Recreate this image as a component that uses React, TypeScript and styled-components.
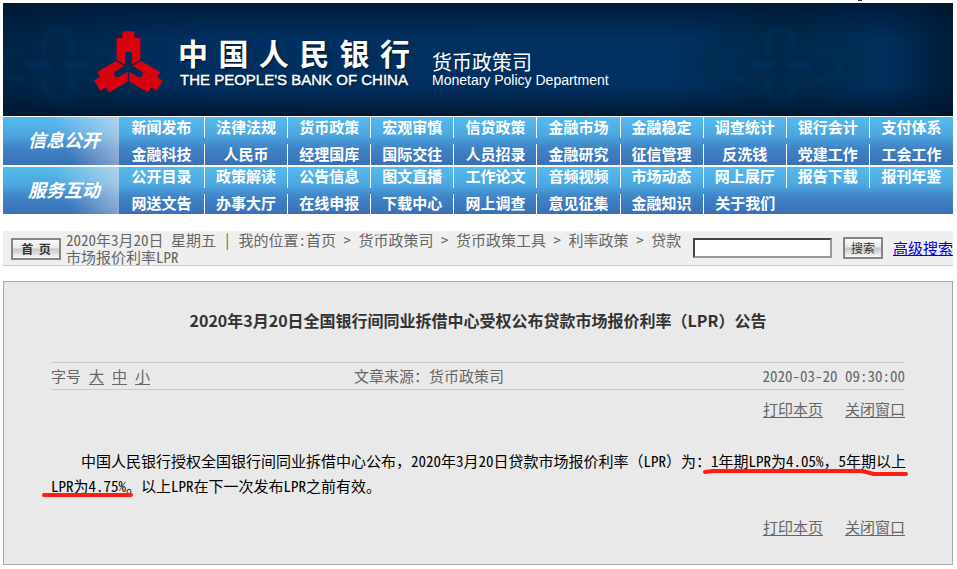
import React from "react";
import styled, { createGlobalStyle } from "styled-components";

const CJK = `"Noto Sans CJK SC", sans-serif`;
const MONO = `"Noto Sans Mono CJK SC", "Liberation Serif", "Noto Sans CJK SC", monospace`;

const GlobalStyle = createGlobalStyle`
  * { box-sizing: border-box; }
  body {
    margin: 0;
    background: #fff;
    font-family: ${MONO};
    font-size: 15px;
    color: #666;
    text-spacing-trim: space-all;
  }
`;

const Page = styled.div`
  padding: 3px 4px 4px 3px;
  background: linear-gradient(#334, #334) 90% 0 / 4px 1px no-repeat;
`;

const Banner = styled.header`
  position: relative;
  z-index: 0;
  display: flex;
  align-items: flex-start;
  height: 113px;
  padding: 28px 0 0 90px;
  overflow: hidden;
  color: #fff;
  background:
    linear-gradient(180deg, rgba(0, 20, 44, 0.7) 0, rgba(0, 20, 44, 0) 36px, rgba(0, 20, 44, 0) 82px, rgba(0, 20, 44, 0.8) 100%),
    linear-gradient(90deg, #002345 0%, #002a52 7%, #003060 22%, #003161 70%, #002a4e 82%, #002f5c 93%, #001c3a 100%);
`;

const Watermark = styled.svg<{ $side: "left" | "right" }>`
  position: absolute;
  z-index: -1;
  top: 12px;
  width: 190px;
  height: 96px;
  opacity: 0.4;
  filter: blur(2px);
  ${(p) => (p.$side === "left" ? "left: -40px;" : "right: 77px;")}
`;

const Emblem = styled.svg`
  flex: none;
  width: 71px;
  height: 63px;
`;

const BankName = styled.div`
  flex: none;
  width: 232px;
  margin: 4px 0 0 14px;
  text-shadow: 1px 1px 2px rgba(0, 0, 0, 0.6);
`;

const BankNameZh = styled.div`
  display: flex;
  justify-content: space-between;
  font: 700 30px/34px ${CJK};
`;

const BankNameEn = styled.div`
  padding: 1px 0 0 2px;
  font: 400 15px/20px "Liberation Sans", sans-serif;
  -webkit-text-stroke: 0.4px #fff;
  white-space: nowrap;
`;

const Department = styled.div`
  flex: none;
  margin: 18px 0 0 22px;
  white-space: nowrap;
`;

const DepartmentZh = styled.div`
  font: 400 20px/26px ${CJK};
`;

const DepartmentEn = styled.div`
  font: 400 14px/10px "Liberation Sans", sans-serif;
`;

const NavGroup = styled.nav`
  display: grid;
  grid-template-columns: 116px 1fr;
  height: 48px;
  margin-top: 1px;
  background: linear-gradient(180deg, #54bbef 0%, #4ea9e0 35%, #3f83c6 65%, #3a70b5 100%);

  & + & {
    height: 47px;
    margin-top: 2px;
  }
`;

const NavLabel = styled.div`
  display: flex;
  align-items: center;
  justify-content: center;
  padding: 0 0 4px 6px;
  color: #fff;
  font: italic 700 18px/24px ${CJK};
  background: linear-gradient(65deg, rgba(225, 225, 235, 0) 50%, rgba(225, 225, 235, 0.65) 100%);
`;

const NavGrid = styled.ul`
  display: grid;
  grid-template-columns: 86px repeat(9, 1fr);
  grid-template-rows: 1fr 1fr;
  row-gap: 6px;
  margin: 0;
  padding: 0;
  list-style: none;
`;

const NavItem = styled.li<{ $last: boolean }>`
  display: flex;
  align-items: center;
  justify-content: center;
  padding-bottom: 2px;
  border-right: ${(p) => (p.$last ? "0" : "1px solid #fff")};
`;

const NavLink = styled.a`
  color: #fff;
  font: 700 15px/18px ${CJK};
  text-decoration: none;
  white-space: nowrap;
`;

const LocationBar = styled.div`
  display: flex;
  align-items: flex-start;
  margin-top: 17px;
  padding-left: 8px;
  background: #efefef;
  border-bottom: 1px solid #ccc;
`;

const ChromeButton = styled.button`
  flex: none;
  height: 22px;
  padding: 0 0 1px;
  border: 2px solid #858585;
  background: linear-gradient(180deg, #fafafa 0%, #e8e8e8 45%, #c6c6c6 50%, #dedede 75%, #f8f8f8 100%);
  color: #333;
`;

const HomeButton = styled(ChromeButton)`
  display: flex;
  align-items: center;
  justify-content: center;
  width: 50px;
  margin-top: 7px;
  font: 700 12px/16px ${CJK};
  white-space: pre;
`;

const SearchButton = styled(ChromeButton)`
  width: 40px;
  margin: 0 10px 0 11px;
  font: 400 12px/16px ${CJK};
`;

const Trail = styled.div`
  flex: 1;
  min-width: 0;
  padding: 0 8px 0 5px;
  line-height: 17px;
`;

const TrailLink = styled.a`
  color: inherit;
  text-decoration: none;
`;

const SearchForm = styled.form`
  display: flex;
  flex: none;
  align-items: center;
  margin-top: 6px;
`;

const SearchInput = styled.input`
  width: 139px;
  height: 20px;
  padding: 0 3px;
  border: 2px solid;
  border-color: #444 #999 #999 #444;
  background: #fff;
  font: 400 13px/16px ${CJK};
`;

const AdvancedLink = styled.a`
  color: #00e;
  white-space: nowrap;
  line-height: 20px;
`;

const Article = styled.article`
  margin-top: 15px;
  padding: 26px 47px 26px;
  border: 1px solid #a2a9b1;
  background: #e9e9e9;
`;

const Title = styled.h1`
  margin: 0;
  color: #333;
  font: 700 16px/24px ${CJK};
  text-align: center;
`;

const Meta = styled.div`
  display: grid;
  grid-template-columns: 35% 1fr auto;
  column-gap: 4px;
  margin-top: 30px;
  border: 1px solid #c9c9c9;
  border-width: 1px 0;
  line-height: 26px;
`;

const FontSizes = styled.div`
  display: flex;
  gap: 8px;
`;

const TextLink = styled.a`
  color: inherit;
  text-decoration: underline;
  text-underline-offset: 2px;
`;

const Actions = styled.div`
  display: flex;
  justify-content: flex-end;
  gap: 22px;
  line-height: 22px;
`;

const TopActions = styled(Actions)`
  margin-top: 8px;
`;

const BottomActions = styled(Actions)`
  margin-top: 18px;
`;

const Paragraph = styled.p`
  position: relative;
  margin: 28px -2px 0 0;
  color: #000;
  line-height: 25px;
  text-indent: 30px;
`;

const FirstMark = styled.svg`
  position: absolute;
  top: 20px;
  right: -2px;
  width: 207px;
  height: 10px;
`;

const SecondMark = styled.svg`
  position: absolute;
  top: 43px;
  left: -11px;
  width: 96px;
  height: 8px;
`;

const ARM = "M-18-109H18V-89H36V-23L10-8V-38A10 10 0 0 0-10-38V-8L-36-23V-89H-18Z";

const GROUPS = [
  {
    label: "信息公开",
    items: [
      ["新闻发布", "法律法规", "货币政策", "宏观审慎", "信贷政策", "金融市场", "金融稳定", "调查统计", "银行会计", "支付体系"],
      ["金融科技", "人民币", "经理国库", "国际交往", "人员招录", "金融研究", "征信管理", "反洗钱", "党建工作", "工会工作"],
    ],
  },
  {
    label: "服务互动",
    items: [
      ["公开目录", "政策解读", "公告信息", "图文直播", "工作论文", "音频视频", "市场动态", "网上展厅", "报告下载", "报刊年鉴"],
      ["网送文告", "办事大厅", "在线申报", "下载中心", "网上调查", "意见征集", "金融知识", "关于我们"],
    ],
  },
];

const TRAIL = ["首页", "货币政策司", "货币政策工具", "利率政策", "贷款市场报价利率LPR"];

function Pattern({ side }: { side: "left" | "right" }) {
  return (
    <Watermark $side={side} viewBox="0 0 190 96" aria-hidden="true">
      <ellipse cx="95" cy="48" rx="80" ry="42" fill="#00243f" opacity="0.6" />
      <g fill="none" stroke="#003a70" strokeWidth="3">
        <path d="M82 40C76 4 114 4 108 40" />
        <path d="M82 60C76 92 114 92 108 60" />
        <path d="M62 36C28 32 28 68 62 64" />
        <path d="M128 36C162 32 162 68 128 64" />
      </g>
      <path d="M64 50h24M102 50h24" stroke="#003a70" strokeWidth="6" />
    </Watermark>
  );
}

function PageActions() {
  return (
    <>
      <TextLink href="#print">打印本页</TextLink>
      <TextLink href="#close">关闭窗口</TextLink>
    </>
  );
}

export default function App() {
  return (
    <Page>
      <GlobalStyle />
      <Banner>
        <Pattern side="left" />
        <Pattern side="right" />
        <Emblem viewBox="-107 -110 214 190" aria-hidden="true">
          <g fill="#d9000f">
            <path d={ARM} />
            <path d={ARM} transform="rotate(120)" />
            <path d={ARM} transform="rotate(240)" />
          </g>
        </Emblem>
        <BankName>
          <BankNameZh>
            {[..."中国人民银行"].map((c) => (
              <span key={c}>{c}</span>
            ))}
          </BankNameZh>
          <BankNameEn>THE PEOPLE'S BANK OF CHINA</BankNameEn>
        </BankName>
        <Department>
          <DepartmentZh>货币政策司</DepartmentZh>
          <DepartmentEn>Monetary Policy Department</DepartmentEn>
        </Department>
      </Banner>

      {GROUPS.map((group) => (
        <NavGroup key={group.label} aria-label={group.label}>
          <NavLabel>{group.label}</NavLabel>
          <NavGrid>
            {group.items.map((row) =>
              row.map((name, i) => (
                <NavItem key={name} $last={i === row.length - 1}>
                  <NavLink href="#nav">{name}</NavLink>
                </NavItem>
              ))
            )}
          </NavGrid>
        </NavGroup>
      ))}

      <LocationBar>
        <HomeButton type="button">首  页</HomeButton>
        <Trail>
          2020年3月20日 星期五 | 我的位置:
          {TRAIL.map((name, i) => (
            <React.Fragment key={name}>
              {i > 0 && " > "}
              <TrailLink href="#trail">{name}</TrailLink>
            </React.Fragment>
          ))}
        </Trail>
        <SearchForm>
          <SearchInput type="text" aria-label="搜索" />
          <SearchButton type="button">搜索</SearchButton>
          <AdvancedLink href="#advanced">高级搜索</AdvancedLink>
        </SearchForm>
      </LocationBar>

      <Article>
        <Title>2020年3月20日全国银行间同业拆借中心受权公布贷款市场报价利率（LPR）公告</Title>
        <Meta>
          <FontSizes>
            <span>字号</span>
            <TextLink href="#large">大</TextLink>
            <TextLink href="#medium">中</TextLink>
            <TextLink href="#small">小</TextLink>
          </FontSizes>
          <span>文章来源：货币政策司</span>
          <time>2020-03-20 09:30:00</time>
        </Meta>
        <TopActions>
          <PageActions />
        </TopActions>
        <Paragraph>
          中国人民银行授权全国银行间同业拆借中心公布，2020年3月20日贷款市场报价利率（LPR）为：1年期LPR为4.05%，5年期以上LPR为4.75%。以上LPR在下一次发布LPR之前有效。
          <FirstMark viewBox="0 0 207 10" aria-hidden="true">
            <path d="M3 4L11 3H160L172 6H204" fill="none" stroke="#ff1e10" strokeWidth="4" strokeLinecap="round" strokeLinejoin="round" />
          </FirstMark>
          <SecondMark viewBox="0 0 96 8" aria-hidden="true">
            <path d="M4 4H91" fill="none" stroke="#ff1e10" strokeWidth="4" strokeLinecap="round" />
          </SecondMark>
        </Paragraph>
        <BottomActions>
          <PageActions />
        </BottomActions>
      </Article>
    </Page>
  );
}
